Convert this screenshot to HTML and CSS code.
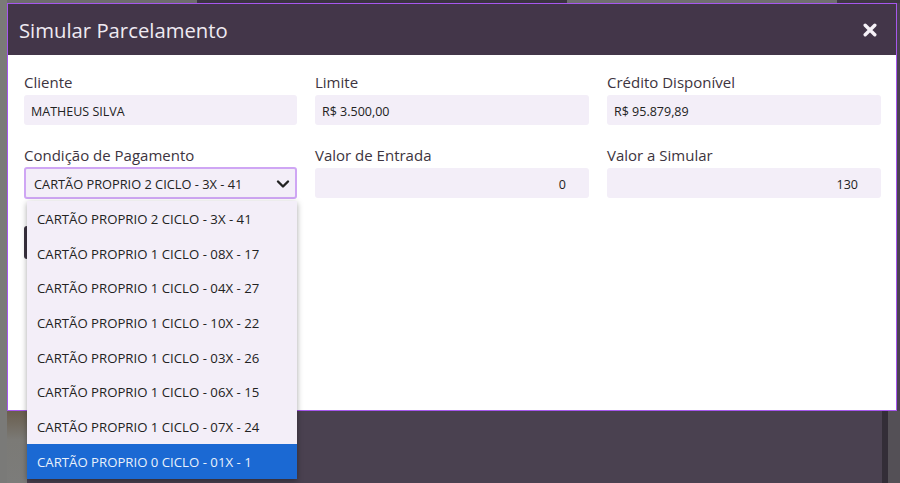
FILE: index.html
```html
<!DOCTYPE html>
<html lang="pt-BR">
<head>
<meta charset="utf-8">
<title>Simular Parcelamento</title>
<link rel="stylesheet" href="styles.css">
</head>
<body>
<div class="backdrop">
  <div class="left-strip"></div>
  <div class="stage">
    <div class="top-strip"></div>
    <div class="modal">
      <div class="modal-header">
        <h1 class="modal-title">Simular Parcelamento</h1>
        <svg class="close" width="14" height="14" viewBox="0 0 14 14"><path d="M2.2 2.2 L11.8 11.8 M11.8 2.2 L2.2 11.8" stroke="#f6f2f8" stroke-width="3.4" stroke-linecap="round"/></svg>
      </div>
      <div class="modal-body">
        <div class="grid">
          <div class="field">
            <label class="label">Cliente</label>
            <div class="input">MATHEUS SILVA</div>
          </div>
          <div class="field">
            <label class="label">Limite</label>
            <div class="input">R$ 3.500,00</div>
          </div>
          <div class="field">
            <label class="label">Crédito Disponível</label>
            <div class="input">R$ 95.879,89</div>
          </div>
          <div class="field select-field">
            <label class="label">Condição de Pagamento</label>
            <div class="select">
              <span>CARTÃO PROPRIO 2 CICLO - 3X - 41</span>
              <svg class="chev" width="14" height="10" viewBox="0 0 14 10"><path d="M2 2.5 L7 7.5 L12 2.5" fill="none" stroke="#222" stroke-width="2.4" stroke-linecap="round" stroke-linejoin="round"/></svg>
            </div>
            <ul class="dropdown">
              <li>CARTÃO PROPRIO 2 CICLO - 3X - 41</li>
              <li>CARTÃO PROPRIO 1 CICLO - 08X - 17</li>
              <li>CARTÃO PROPRIO 1 CICLO - 04X - 27</li>
              <li>CARTÃO PROPRIO 1 CICLO - 10X - 22</li>
              <li>CARTÃO PROPRIO 1 CICLO - 03X - 26</li>
              <li>CARTÃO PROPRIO 1 CICLO - 06X - 15</li>
              <li>CARTÃO PROPRIO 1 CICLO - 07X - 24</li>
              <li class="active">CARTÃO PROPRIO 0 CICLO - 01X - 1</li>
            </ul>
          </div>
          <div class="field">
            <label class="label">Valor de Entrada</label>
            <div class="input num">0</div>
          </div>
          <div class="field">
            <label class="label">Valor a Simular</label>
            <div class="input num">130</div>
          </div>
        </div>
        <div class="actions">
          <div class="btn"></div>
        </div>
      </div>
    </div>
    <div class="below">
      <div class="below-left"></div>
      <div class="below-main"></div>
      <div class="below-edge"></div>
    </div>
  </div>
</div>
</body>
</html>
```

FILE: styles.css
```css
* { box-sizing: border-box; }
html, body { margin: 0; padding: 0; }
body {
  width: 900px;
  height: 483px;
  overflow: hidden;
  background: #4a4150;
  font-family: "Open Sans", "Noto Sans", sans-serif;
}
.backdrop {
  display: flex;
  height: 483px;
}
.left-strip {
  width: 7px;
  flex: none;
  background: #7a7a78;
}
.stage {
  width: 893px;
  display: flex;
  flex-direction: column;
}
.top-strip {
  height: 3px;
  background: linear-gradient(90deg, #6d6d6d 0 190px, #3a3440 190px 560px, #6f6f6f 560px 830px, #3e3842 830px);
}
.modal {
  width: 890px;
  height: 408px;
  border: 1px solid #a657ee;
  background: #fff;
  display: flex;
  flex-direction: column;
}
.modal-header {
  height: 51px;
  flex: none;
  background: #433649;
  display: flex;
  align-items: center;
  justify-content: space-between;
  padding: 0 19px 0 11px;
}
.modal-title {
  margin: 0;
  font-weight: 400;
  font-size: 20.3px;
  color: #efeaf2;
}
.close {
  margin-top: 1px;
}
.modal-body {
  padding: 17px 15px 0 16px;
  position: relative;
}
.grid {
  display: grid;
  grid-template-columns: 273px 274px 274px;
  column-gap: 18px;
  row-gap: 20px;
}
.field {
  display: flex;
  flex-direction: column;
}
.label {
  font-size: 15px;
  color: #3d3440;
  line-height: 20px;
  height: 23px;
}
.input {
  height: 30px;
  background: #f3eef8;
  border-radius: 3px;
  font-size: 12.5px;
  color: #222;
  display: flex;
  align-items: center;
  padding: 2px 7px 0;
}
.input.num {
  justify-content: flex-end;
  padding-right: 23px;
}
.select-field { position: relative; }
.select {
  height: 32px;
  margin-top: -1px;
  border: 2px solid #cfa6f4;
  border-radius: 3px;
  background: #f3eef8;
  display: flex;
  align-items: center;
  justify-content: space-between;
  padding: 1px 5px 0 8px;
  font-size: 12.8px;
  color: #222;
}
.chev { margin-top: 0; }
.dropdown {
  position: absolute;
  left: 3px;
  top: 56px;
  width: 270px;
  margin: 0;
  padding: 0;
  list-style: none;
  background: #f3eef8;
  box-shadow: 0 2px 6px rgba(0,0,0,0.35);
  z-index: 5;
}
.dropdown li {
  height: 34.7px;
  display: flex;
  align-items: center;
  padding: 1px 0 0 10px;
  font-size: 13.2px;
  color: #222;
}
.dropdown li.active {
  background: #1b69d3;
  color: #eaf1fb;
}
.actions {
  margin-top: 27px;
}
.btn {
  width: 80px;
  height: 33px;
  border-radius: 3px;
  background: #3b3341;
}
.below {
  flex: 1;
  display: flex;
}
.below-left {
  width: 20px;
  background: linear-gradient(180deg, #6a5e4e, #7b7a76 40%, #7c7c7a);
}
.below-main {
  flex: 1;
  background: #4a4150;
}
.below-edge {
  width: 18px;
  background: linear-gradient(90deg, #332d37 0 6px, #545056 6px);
}
```
